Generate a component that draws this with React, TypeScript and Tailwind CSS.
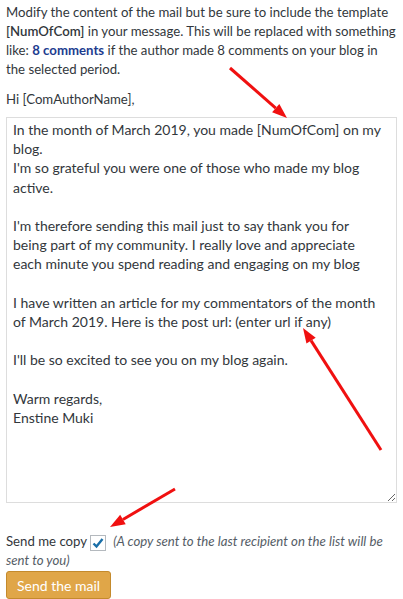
import { useState } from "react";

const message = `In the month of March 2019, you made [NumOfCom] on my blog.
I'm so grateful you were one of those who made my blog active.

I'm therefore sending this mail just to say thank you for being part of my community. I really love and appreciate each minute you spend reading and engaging on my blog

I have written an article for my commentators of the month of March 2019. Here is the post url: (enter url if any)

I'll be so excited to see you on my blog again.

Warm regards,
Enstine Muki`;

/* red arrows drawn over the screenshot */
function Arrow({ x1, y1, x2, y2 }: { x1: number; y1: number; x2: number; y2: number }) {
  const a = Math.atan2(y2 - y1, x2 - x1);
  const len = 15;
  const w = 5.5;
  const bx = x2 - len * Math.cos(a);
  const by = y2 - len * Math.sin(a);
  const p1 = `${bx + w * Math.sin(a)},${by - w * Math.cos(a)}`;
  const p2 = `${bx - w * Math.sin(a)},${by + w * Math.cos(a)}`;
  return (
    <g>
      <line x1={x1} y1={y1} x2={bx} y2={by} stroke="#f01010" strokeWidth={3} />
      <polygon points={`${x2},${y2} ${p1} ${p2}`} fill="#f01010" />
    </g>
  );
}

export default function App() {
  const [copy, setCopy] = useState(true);
  const [text, setText] = useState(message);

  return (
    <div
      className="relative w-[403px] h-[599px] overflow-hidden bg-white pl-[6px] text-[13.2px] leading-[19px] text-[#32373c]"
      style={{ fontFamily: 'Lato, "Open Sans", sans-serif' }}
    >
      <p className="pt-[3px] w-[397px]">
        Modify the content of the mail but be sure to include the template{" "}
        <b className="font-semibold">[NumOfCom]</b> in your message. This will be replaced with something
        like: <b className="font-bold text-[#1d3c8f]">8 comments</b> if the author made 8 comments on your blog in
        <br />
        the selected period.
      </p>

      <p className="mt-[11px]">Hi [ComAuthorName],</p>

      <textarea
        value={text}
        onChange={(e) => setText(e.target.value)}
        className="mt-[8px] block w-[391px] h-[386px] border border-[#dddddd] pl-[6px] pr-[13px] py-[2px] text-[14px] leading-[19.2px] text-[#32373c] outline-none resize-y"
        style={{ fontFamily: 'Lato, "Open Sans", sans-serif' }}
      />

      <div className="mt-[29px] w-[391px]">
        Send me copy{" "}
        <span
          onClick={() => setCopy(!copy)}
          className="inline-flex items-center justify-center align-[-3px] w-[16px] h-[16px] border border-[#b4b9be] bg-white mr-[7px] cursor-pointer"
        >
          {copy && (
            <svg width="12" height="12" viewBox="0 0 12 12">
              <path d="M1.5 6.5 L4.5 9.5 L10.5 2" fill="none" stroke="#1a6fa8" strokeWidth="2.4" />
            </svg>
          )}
        </span>
        <i className="text-[#555d66]">(A copy sent to the last recipient on the list will be sent to you)</i>
      </div>

      <button className="mt-[1px] h-[28px] px-[10px] rounded-[3px] bg-[#e0a648] border border-[#c48a2c] text-white text-[14px]">
        Send the mail
      </button>

      <svg className="absolute inset-0 pointer-events-none" width="403" height="599">
        <Arrow x1={230} y1={68} x2={287} y2={118} />
        <Arrow x1={381} y1={450} x2={303} y2={328} />
        <Arrow x1={175} y1={489} x2={110} y2={527} />
      </svg>
    </div>
  );
}
